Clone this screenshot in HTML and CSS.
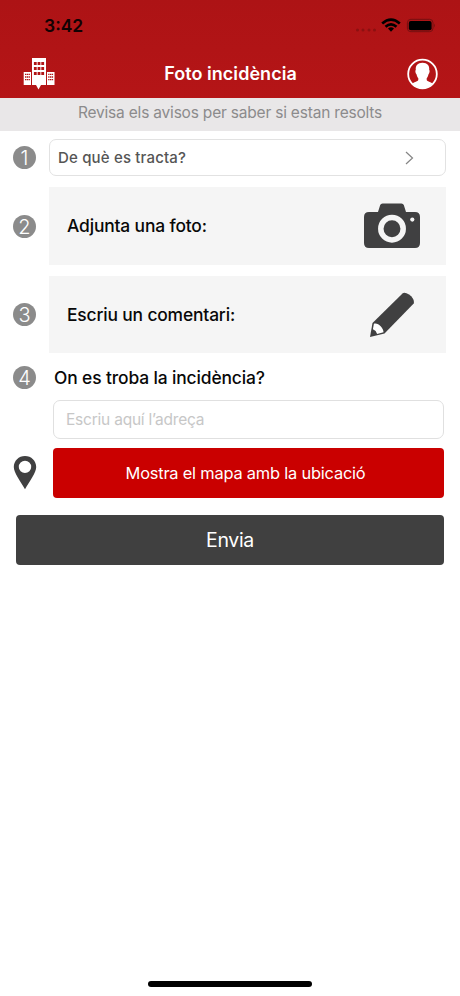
FILE: index.html
```
<!DOCTYPE html>
<html lang="ca">
<head>
<meta charset="utf-8">
<title>Foto incidència</title>
<link rel="stylesheet" href="styles.css">
</head>
<body>
<header class="header">
  <div class="status">
    <span class="time">3:42</span>
    <svg class="status-icons" width="84" height="20" viewBox="0 0 84 20">
      <g fill="#8c1011"><circle cx="6.500" cy="15" r="1.5"/><circle cx="12" cy="15" r="1.5"/><circle cx="18" cy="15" r="1.5"/><circle cx="23.500" cy="15" r="1.5"/></g>
      <g fill="none" stroke="#000" stroke-width="2.7"><path d="M31.2 8.5Q40 .8 48.8 8.5"/><path d="M34.5 11.8Q40 6.900 45.500 11.800"/></g>
      <path d="M37 13.500Q40 11.200 43 13.500L40 16.700Z"/>
      <rect x="56.400" y="4.300" width="25.600" height="12.400" rx="3.500" fill="none" stroke="#741011"/>
      <rect x="57.800" y="5.900" width="22.800" height="9.300" rx="2"/>
      <path d="M83 8.400Q84.500 10.400 83 12.400Z" fill="#741011"/>
    </svg>
  </div>
  <div class="nav">
    <svg class="logo" width="32" height="32" viewBox="0 0 32 32">
      <path fill="#fff" d="M9 0H23V27H18L15.500 31.500L13 27H9ZM.7 14H8V27H.7ZM24 14H31.500V27H24Z"/>
      <path fill="#b11416" d="M10.900 4h2.800v3h-2.800zm3.700 0h2.800v3h-2.800zm3.700 0h2.800v3h-2.800zM10.900 9h2.800v3h-2.800zm3.700 0h2.800v3h-2.800zm3.700 0h2.800v3h-2.800zM10.900 14h2.800v3h-2.800zm3.700 0h2.800v3h-2.800zm3.700 0h2.800v3h-2.800z"/>
      <path stroke="#b11416" stroke-width="1.300" stroke-dasharray="1.300 .5" d="M2 16.300h5.200M2 19h5.200M2 21.700h5.200M25.200 16.300h5.200M25.200 19h5.200M25.200 21.700h5.200"/>
    </svg>
    <h1 class="title"><span>Foto incidència</span></h1>
    <svg class="profile" width="32" height="32" viewBox="0 0 32 32">
      <circle cx="16.500" cy="16" r="14.300" fill="none" stroke="#fff" stroke-width="1.800"/>
      <path transform="translate(.5)" fill="#fff" d="M16 4.800C20.800 4.800 23.200 7.800 22.700 12C23.500 12.200 23 15.500 22.100 16C21.700 18 21 19.300 20.200 20.200V22C20.700 23.500 24 23.800 26.200 25.500Q22 30.300 16 30.300T5.800 25.500C8 23.800 11.300 23.500 11.800 22V20.200C11 19.300 10.300 18 9.900 16C9 15.500 8.500 12.200 9.300 12C8.800 7.800 11.200 4.800 16 4.800Z"/>
    </svg>
  </div>
</header>
<p class="notice"><span>Revisa els avisos per saber si estan resolts</span></p>
<main class="form">
  <div class="row">
    <span class="badge">1</span>
    <div class="select"><span>De què es tracta?</span>
      <svg width="10" height="14" viewBox="0 0 10 14"><path d="M2 1L8.500 7L2 13" fill="none" stroke="#858585" stroke-width="1.200"/></svg>
    </div>
  </div>
  <div class="row photo">
    <span class="badge">2</span>
    <div class="card"><span class="photo-label">Adjunta una foto:</span>
      <svg class="camera" width="56" height="46" viewBox="0 0 56 46">
        <path fill="#404041" d="M5 9H14L16.200 2Q16.800 .5 18.500 .5H37.500Q39.200 .5 39.800 2L42 9H51Q56 9 56 14V40Q56 45 51 45H5Q0 45 0 40V14Q0 9 5 9Z"/>
        <circle cx="28" cy="25.700" r="11.200" fill="#404041" stroke="#f5f5f5" stroke-width="5.500"/>
        <circle cx="48.300" cy="16.600" r="2.100" fill="#f5f5f5"/>
      </svg>
    </div>
  </div>
  <div class="row comment">
    <span class="badge">3</span>
    <div class="card"><span class="comment-label">Escriu un comentari:</span>
      <svg class="pencil" width="46" height="46" viewBox="0 0 46 46">
        <path fill="#404041" d="M1 45L3.500 31L33.500 1.500Q35.500 -.3 40 2.500Q46 7 44.700 11.500L15.500 41.500Z"/>
        <path fill="#fff" d="M4.900 31.700C8.500 30 15 36 14.500 40.300L8.100 42Q7.300 38.500 3.900 37.300Z"/>
      </svg>
    </div>
  </div>
  <div class="row location">
    <span class="badge">4</span>
    <label class="location-label" for="address">On es troba la incidència?</label>
  </div>
  <input class="address" id="address" type="text" placeholder="Escriu aquí l’adreça">
  <div class="row map">
    <svg class="pin" width="24" height="34" viewBox="0 0 24 34">
      <path fill="#404041" fill-rule="evenodd" d="M12 0C5.700 0 .8 4.800 .8 11C.8 17 7.500 25 12 33.300C16.500 25 23.200 17 23.200 11C23.200 4.800 18.300 0 12 0ZM12 4.700A6.200 6.200 0 1 1 12 17.100A6.200 6.200 0 1 1 12 4.700Z"/>
    </svg>
    <button class="map-button"><span>Mostra el mapa amb la ubicació</span></button>
  </div>
  <button class="send"><span>Envia</span></button>
</main>
<div class="home-bar"></div>
</body>
</html>
```
FILE: styles.css
```
* { box-sizing: border-box; }
body {
  margin: 0;
  height: 996px;
  display: flex;
  flex-direction: column;
  background: #fff;
  color: #080808;
  font-family: Inter, sans-serif;
  overflow: hidden;
}
svg { display: block; flex: none; }
span, label { white-space: nowrap; }
button { border: 0; padding: 0; font-family: inherit; }
.header {
  height: 98px;
  flex: none;
  background: linear-gradient(#ad1315, #b51517);
}
.status {
  height: 50px;
  padding: 15px 25px 0 44px;
  display: flex;
  justify-content: space-between;
}
.time { font-size: 17.5px; line-height: 21px; font-weight: 600; color: #120203; }
.nav {
  height: 48px;
  padding: 0 22px 0 23px;
  display: flex;
  align-items: center;
  justify-content: space-between;
}
.logo { margin-bottom: 1px; }
.title {
  margin: 0;
  color: #fff;
  font-size: 18px;
  line-height: 24px;
  font-weight: 600;
  letter-spacing: .05px;
}
.notice {
  margin: 0;
  height: 33px;
  flex: none;
  background: #e9e7e8;
  color: #8c8b8c;
  text-align: center;
  font-size: 15.5px;
  line-height: 30px;
  letter-spacing: -.2px;
}
.form { padding: 8px 14px 0 13px; }
.row { display: flex; align-items: center; }
.badge {
  width: 23px;
  height: 23px;
  margin-right: 13px;
  flex: none;
  border-radius: 50%;
  background: #8b8b8b;
  color: #fff;
  font-size: 20px;
  font-weight: 300;
  line-height: 24px;
  text-align: center;
}
.select {
  flex: 1;
  height: 37px;
  padding: 0 31px 0 8px;
  border: 1px solid #e2e2e2;
  border-radius: 7px;
  display: flex;
  align-items: center;
  justify-content: space-between;
  color: #555;
  font-size: 15px;
  font-weight: 500;
  letter-spacing: .17px;
}
.card {
  flex: 1;
  height: 78px;
  padding: 0 26px 0 18px;
  display: flex;
  align-items: center;
  justify-content: space-between;
  background: #f5f5f5;
  font-size: 17.4px;
  font-weight: 500;
  letter-spacing: -.15px;
}
.photo { margin-top: 11px; }
.comment { margin-top: 11px; }
.comment .card { height: 77px; }
.pencil { margin-right: 5px; }
.location { height: 47px; padding-top: 2px; }
.location-label { margin-left: 5px; font-size: 17.4px; font-weight: 500; letter-spacing: -.12px; }
.address {
  display: block;
  width: 391px;
  height: 39px;
  margin-left: 40px;
  padding: 0 12px 1px;
  border: 1px solid #e0e0e0;
  border-radius: 7px;
  font-family: inherit;
  font-size: 15.5px;
  letter-spacing: -.22px;
}
.address::placeholder { color: #c7c7c7; opacity: 1; }
.map { margin: 9px 2px 0 0; }
.pin { margin-right: 16px; }
.map-button {
  flex: 1;
  height: 50px;
  padding: 0 6px 0 0;
  border-radius: 4px;
  background: #ca0000;
  color: #fff;
  font-size: 16.4px;
  letter-spacing: -.2px;
}
.photo-label, .comment-label { margin-bottom: 1px; }
.send {
  display: block;
  width: 428px;
  height: 50px;
  margin: 17px 0 0 3px;
  border-radius: 4px;
  background: #404040;
  color: #fff;
  font-size: 19.5px;
  letter-spacing: -.35px;
}
.home-bar {
  width: 164px;
  height: 6px;
  margin: auto auto 9px 148px;
  border-radius: 3px;
  background: #000;
}
```
